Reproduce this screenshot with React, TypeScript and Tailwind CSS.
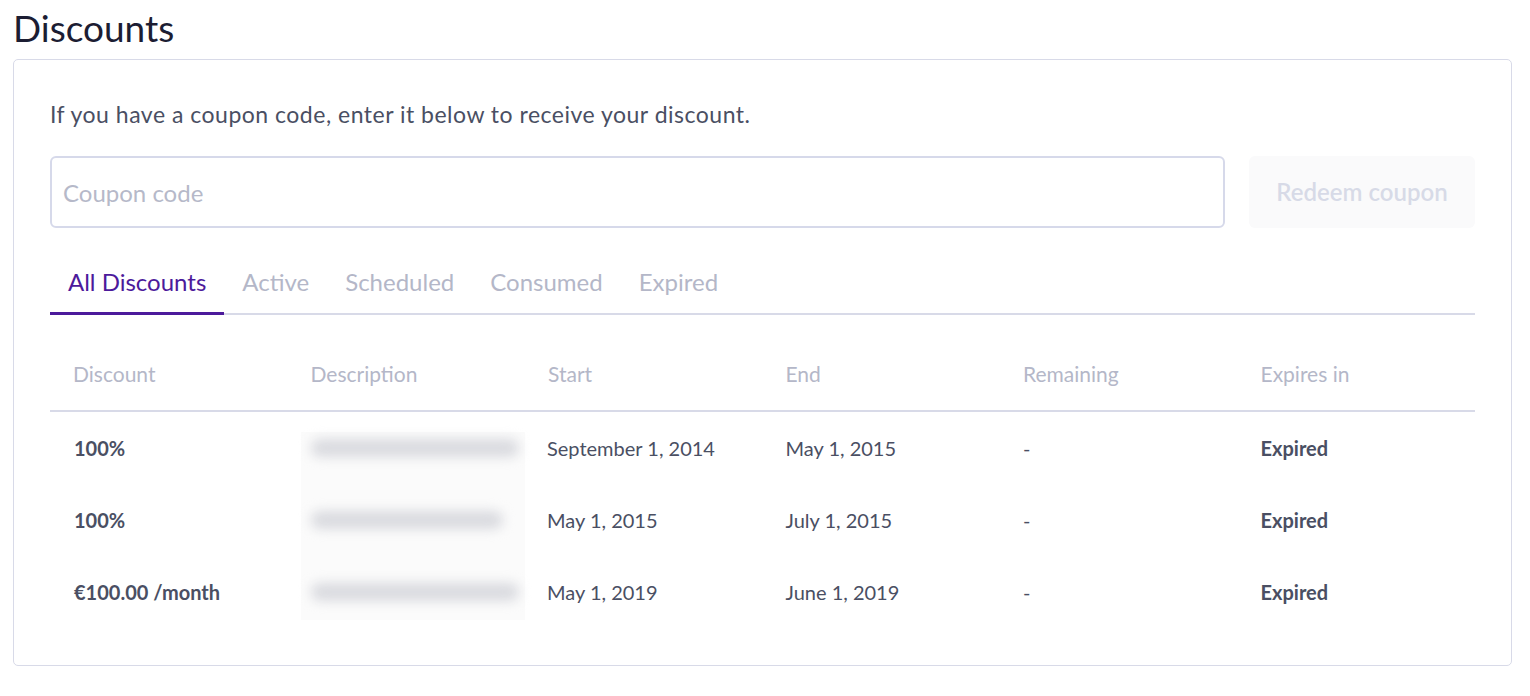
import React from "react";

const rows = [
  { discount: "100%", start: "September 1, 2014", end: "May 1, 2015", w: "w-[208px]" },
  { discount: "100%", start: "May 1, 2015", end: "July 1, 2015", w: "w-[192px]" },
  { discount: "€100.00 /month", start: "May 1, 2019", end: "June 1, 2019", w: "w-[208px]" },
];

const tabs = ["All Discounts", "Active", "Scheduled", "Consumed", "Expired"];
const headers = ["Discount", "Description", "Start", "End", "Remaining", "Expires in"];

export default function App() {
  return (
    <div className="min-h-[696px] bg-white px-[13px] text-[#4a4f63]" style={{ fontFamily: "Lato, 'Open Sans', sans-serif" }}>
      <h1 className="pt-[6px] pb-[9px] text-[37px] leading-[44px] font-normal text-[#1c1d33]">Discounts</h1>
      <div className="w-[1499px] rounded-[5px] border border-[#d8dae8] px-[36px] pt-[40px] pb-[37px]">
        <p className="text-[23px] leading-[28px] tracking-[0.5px] text-[#4a4f63]">
          If you have a coupon code, enter it below to receive your discount.
        </p>
        <div className="mt-[28px] flex gap-[24px]">
          <input
            placeholder="Coupon code"
            className="h-[72px] flex-1 rounded-[6px] border-2 border-[#d6d9ea] px-[11px] text-[24px] text-[#4a4f63] outline-none placeholder:text-[#b6b9c9]"
          />
          <button className="h-[72px] w-[226px] rounded-[6px] bg-[#fafafb] text-[24px] font-semibold text-[#d7dae7]">
            Redeem coupon
          </button>
        </div>
        <div className="mt-[28px] flex border-b-2 border-[#d8dae8]">
          {tabs.map((t, i) => (
            <div
              key={t}
              className={
                i === 0
                  ? "-mb-[2px] border-b-[3px] border-[#4c1a9b] px-[18px] pt-[12px] pb-[16px] text-[24px] leading-[28px] text-[#4c1a9b]"
                  : "px-[18px] pt-[12px] pb-[16px] text-[24px] leading-[28px] text-[#b4b7c8]"
              }
            >
              {t}
            </div>
          ))}
        </div>
        <div className="mt-[25px]">
          <div className="grid h-[72px] grid-cols-6 items-center border-b-2 border-[#d8dae8]">
            {headers.map((h) => (
              <div key={h} className="pl-[23px] pb-[2px] text-[21px] text-[#b4b7c8]">
                {h}
              </div>
            ))}
          </div>
          {rows.map((r, i) => (
            <div key={i} className="grid h-[72px] grid-cols-6 items-center text-[20px]">
              <div className="pl-[24px] font-bold text-[#4a4f63]">{r.discount}</div>
              <div className="flex h-full items-center">
                <div className={`ml-[13px] flex w-[232px] items-center bg-[#fbfbfb] ${i === 0 ? "mt-[20px] h-[52px]" : i === 2 ? "mb-[8px] h-[64px]" : "h-full"}`}>
                  <div className={`ml-[10px] h-[18px] ${r.w} rounded-full bg-[#d9dadf] blur-[6px] ${i === 0 ? "-mt-[20px]" : i === 2 ? "mt-[8px]" : ""}`} />
                </div>
              </div>
              <div className="pl-[22px] text-[#4a4f63]">{r.start}</div>
              <div className="pl-[23px] text-[#4a4f63]">{r.end}</div>
              <div className="pl-[23px] text-[#4a4f63]">-</div>
              <div className="pl-[23px] font-bold text-[#4a4f63]">Expired</div>
            </div>
          ))}
        </div>
      </div>
    </div>
  );
}
